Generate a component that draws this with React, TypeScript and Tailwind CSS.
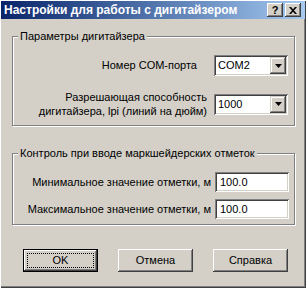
import React from "react";

const raised =
  "shadow-[inset_-1px_-1px_0_#404040,inset_1px_1px_0_#fff,inset_-2px_-2px_0_#808080,inset_2px_2px_0_#d4d0c8]";
const comboBtn =
  "shadow-[inset_-1px_-1px_0_#404040,inset_1px_1px_0_#d4d0c8,inset_-2px_-2px_0_#808080,inset_2px_2px_0_#fff]";
const sunken =
  "shadow-[inset_1px_1px_0_#808080,inset_-1px_-1px_0_#fff,inset_2px_2px_0_#404040,inset_-2px_-2px_0_#d4d0c8]";

function Combo({ value }: { value: string }) {
  return (
    <div className={`w-[74px] h-[21px] bg-white flex items-center p-[2px] ${sunken}`}>
      <span className="flex-1 pl-[2px] leading-none">{value}</span>
      <div className={`w-[16px] h-[17px] bg-[#d4d0c8] flex items-center justify-center ${comboBtn}`}>
        <svg width="7" height="4" viewBox="0 0 7 4">
          <path d="M0 0h7L3.5 4z" fill="#000" />
        </svg>
      </div>
    </div>
  );
}

function Field({ value }: { value: string }) {
  return (
    <div className={`w-[74px] h-[20px] bg-white flex items-center pl-[5px] ${sunken}`}>
      <span className="leading-none">{value}</span>
    </div>
  );
}

function Group({ title, className, children }: { title: string; className: string; children: React.ReactNode }) {
  return (
    <div
      className={`relative border border-[#808080] shadow-[1px_1px_0_#fff,inset_1px_1px_0_#fff] ${className}`}
    >
      <span className="absolute -top-[8px] left-[5px] px-[2px] bg-[#d4d0c8] leading-[14px] whitespace-nowrap">
        {title}
      </span>
      {children}
    </div>
  );
}

function Button({ label, isDefault }: { label: string; isDefault?: boolean }) {
  if (isDefault) {
    return (
      <div className="w-[75px] h-[23px] border border-black">
        <div className={`relative h-full bg-[#d4d0c8] flex items-center justify-center ${raised}`}>
          <span className="absolute inset-[3px] border border-dotted border-black" />
          <span>{label}</span>
        </div>
      </div>
    );
  }
  return (
    <div className={`w-[75px] h-[23px] bg-[#d4d0c8] flex items-center justify-center ${raised}`}>
      {label}
    </div>
  );
}

export default function App() {
  return (
    <div
      className="w-[306px] h-[288px] bg-[#d4d0c8] flex flex-col px-[1px] pt-[1px] pb-[2px] shadow-[inset_1px_1px_0_#fff,inset_-1px_-1px_0_#404040,inset_-2px_-2px_0_#808080] text-[11px] text-black font-['Liberation_Sans',Arial,sans-serif]"
    >
      <div className="h-[18px] bg-linear-to-r from-[#0a246a] to-[#a6caf0] flex items-center pl-[3px] pr-[4px]">
        <span className="flex-1 text-white font-bold text-[12px] leading-none whitespace-nowrap">
          Настройки для работы с дигитайзером
        </span>
        <div className="flex gap-[2px]">
          <div className={`w-[16px] h-[14px] bg-[#d4d0c8] flex items-center justify-center font-bold text-[11px] leading-none ${raised}`}>
            ?
          </div>
          <div className={`w-[16px] h-[14px] bg-[#d4d0c8] flex items-center justify-center ${raised}`}>
            <svg width="8" height="7" viewBox="0 0 8 7">
              <path d="M0 0h2l2 2.2L6 0h2L5 3.5 8 7H6L4 4.8 2 7H0l3-3.5z" fill="#000" />
            </svg>
          </div>
        </div>
      </div>

      <div className="flex flex-col pl-[11px] pr-[10px] pt-[17px]">
        <Group title="Параметры дигитайзера" className="h-[90px] flex flex-col pt-[18px] pr-[6px]">
          <div className="flex items-center justify-end">
            <span className="mr-[17px] whitespace-nowrap">Номер COM-порта</span>
            <Combo value="COM2" />
          </div>
          <div className="flex items-center justify-end mt-[14px]">
            <span className="mr-[7px] text-right leading-[14px] whitespace-nowrap">
              Разрешающая способность
              <br />
              дигитайзера, lpi (линий на дюйм)
            </span>
            <Combo value="1000" />
          </div>
        </Group>

        <Group
          title="Контроль при вводе маркшейдерских отметок"
          className="mt-[27px] h-[72px] flex flex-col gap-[7px] pt-[18px] pr-[5px]"
        >
          <div className="flex items-center justify-end">
            <span className="mr-[4px] whitespace-nowrap">Минимальное значение отметки, м</span>
            <Field value="100.0" />
          </div>
          <div className="flex items-center justify-end">
            <span className="mr-[4px] whitespace-nowrap">Максимальное значение отметки, м</span>
            <Field value="100.0" />
          </div>
        </Group>
      </div>

      <div className="flex gap-[20px] pl-[22px] mt-[24px]">
        <Button label="OK" isDefault />
        <Button label="Отмена" />
        <Button label="Справка" />
      </div>
    </div>
  );
}
